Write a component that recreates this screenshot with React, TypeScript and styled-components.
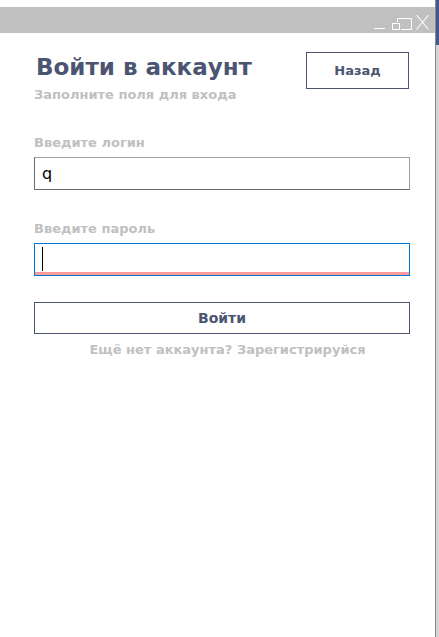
import React from "react";
import styled, { createGlobalStyle } from "styled-components";

const Global = createGlobalStyle`
  html, body { margin: 0; padding: 0; background: #ffffff; }
  body { font-family: "DejaVu Sans", "Liberation Sans", sans-serif; }
  * { box-sizing: border-box; }
`;

const Screen = styled.div`
  display: flex;
  width: 439px;
  height: 637px;
  overflow: hidden;
`;

const Window = styled.div`
  width: 436px;
  height: 637px;
  display: flex;
  flex-direction: column;
  background: #ffffff;
  padding-top: 7px;
  border-right: 1px solid #8a8a8a;
`;

const Backdrop = styled.div`
  width: 3px;
  height: 637px;
  display: flex;
  flex-direction: column;
  background: #d4d4d4;
`;

const BackdropTop = styled.div`
  height: 45px;
  background: #3e5a8c;
`;

const TitleBar = styled.div`
  height: 26px;
  background: #c0c0c0;
  display: flex;
  justify-content: flex-end;
  align-items: flex-start;
  padding-right: 6px;
`;

const IconBox = styled.div<{ $w: number; $gap: number }>`
  width: ${(p) => p.$w}px;
  height: 26px;
  margin-left: ${(p) => p.$gap}px;
  display: flex;
`;

const Content = styled.div`
  padding: 19px 26px 0 34px;
  display: flex;
  flex-direction: column;
`;

const HeaderRow = styled.div`
  display: flex;
  justify-content: space-between;
  align-items: flex-start;
`;

const Heading = styled.div`
  display: flex;
  flex-direction: column;
`;

const Title = styled.h1`
  margin: 0;
  padding-left: 2px;
  font-size: 23px;
  font-weight: bold;
  color: #4b5572;
  line-height: 31px;
`;

const Subtitle = styled.div`
  font-size: 13px;
  font-weight: bold;
  color: #c0c0c0;
  line-height: 16px;
  margin-top: 4px;
`;

const OutlineButton = styled.button<{ $wide?: boolean }>`
  width: ${(p) => (p.$wide ? "376px" : "103px")};
  height: ${(p) => (p.$wide ? "32px" : "37px")};
  background: #ffffff;
  border: 1px solid #4b5572;
  color: #4b5572;
  font-family: inherit;
  font-size: ${(p) => (p.$wide ? "14px" : "13px")};
  font-weight: bold;
  padding: 0;
  cursor: pointer;
`;

const Label = styled.div<{ $top: number }>`
  margin-top: ${(p) => p.$top}px;
  font-size: 13px;
  font-weight: bold;
  color: #c0c0c0;
  line-height: 16px;
  height: 16px;
`;

const Field = styled.div<{ $focused?: boolean }>`
  margin-top: 6px;
  width: 376px;
  height: 33px;
  display: flex;
  align-items: center;
  padding-left: 7px;
  border: 1px solid ${(p) => (p.$focused ? "#0078d7" : "#a0a0a0")};
  border-left-color: ${(p) => (p.$focused ? "#0078d7" : "#6a6a6a")};
  border-bottom-color: ${(p) => (p.$focused ? "#0078d7" : "#6a6a6a")};
  box-shadow: ${(p) => (p.$focused ? "inset 0 -3px 0 #ff9a9a" : "none")};
  font-size: 16px;
  font-weight: normal;
  color: #000000;
`;

const Caret = styled.div`
  width: 1px;
  height: 24px;
  margin-top: -2px;
  background: #000000;
`;

const SubmitWrap = styled.div`
  margin-top: 26px;
`;

const RegisterLink = styled.div`
  margin-top: 8px;
  padding-left: 12px;
  text-align: center;
  font-size: 13px;
  font-weight: bold;
  color: #c0c0c0;
  line-height: 16px;
`;

export default function App() {
  return (
    <>
      <Global />
      <Screen>
        <Window>
          <TitleBar>
            <IconBox $w={12} $gap={0}>
              <svg width="12" height="26" viewBox="0 0 12 26">
                <line x1="0" y1="21.5" x2="11" y2="21.5" stroke="#fff" strokeWidth="1" />
              </svg>
            </IconBox>
            <IconBox $w={22} $gap={5}>
              <svg width="22" height="26" viewBox="0 0 22 26">
                <path d="M6.5 15 V11.5 H20.5 V22.5 H10" fill="none" stroke="#fff" strokeWidth="1" />
                <rect x="1.5" y="16.5" width="7" height="6" fill="none" stroke="#fff" strokeWidth="1" />
              </svg>
            </IconBox>
            <IconBox $w={13} $gap={3}>
              <svg width="13" height="26" viewBox="0 0 13 26">
                <path d="M0.5 8 L12.5 22.5 M12.5 8 L0.5 22.5" stroke="#fff" strokeWidth="1.1" />
              </svg>
            </IconBox>
          </TitleBar>
          <Content>
            <HeaderRow>
              <Heading>
                <Title>Войти в аккаунт</Title>
                <Subtitle>Заполните поля для входа</Subtitle>
              </Heading>
              <OutlineButton>Назад</OutlineButton>
            </HeaderRow>
            <Label $top={32}>Введите логин</Label>
            <Field>q</Field>
            <Label $top={31}>Введите пароль</Label>
            <Field $focused>
              <Caret />
            </Field>
            <SubmitWrap>
              <OutlineButton $wide>Войти</OutlineButton>
            </SubmitWrap>
            <RegisterLink>Ещё нет аккаунта? Зарегистрируйся</RegisterLink>
          </Content>
        </Window>
        <Backdrop>
          <BackdropTop />
        </Backdrop>
      </Screen>
    </>
  );
}
